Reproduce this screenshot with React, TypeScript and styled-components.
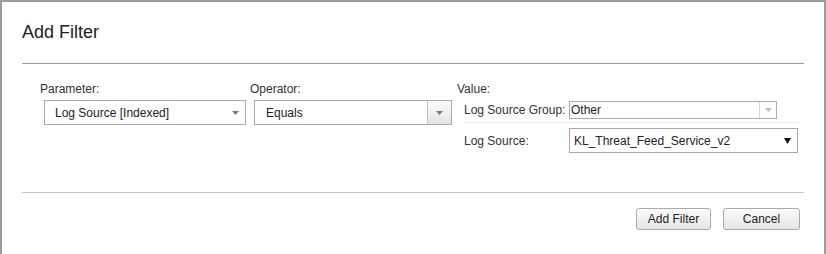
import React from 'react';
import styled, { createGlobalStyle } from 'styled-components';

const GlobalStyle = createGlobalStyle`
  html, body {
    margin: 0;
    padding: 0;
    background: #fff;
  }
  body {
    font-family: "Liberation Sans", Arial, sans-serif;
    color: #333;
  }
`;

const Dialog = styled.div`
  box-sizing: border-box;
  width: 826px;
  height: 254px;
  border: 2px solid #9c9c9c;
  border-bottom: none;
  padding: 19px 20px 0 20px;
  background: #fff;
`;

const Title = styled.h2`
  margin: 0;
  font-size: 18px;
  line-height: 22px;
  font-weight: normal;
  color: #222;
`;

const Rule = styled.div<{ $color: string; $top: number }>`
  height: 1px;
  margin-top: ${(p) => p.$top}px;
  background: ${(p) => p.$color};
`;

const Form = styled.div`
  display: flex;
  gap: 5px;
  padding: 18px 0 0 18px;
  height: 128px;
  box-sizing: border-box;
`;

const Column = styled.div<{ $width?: number }>`
  display: flex;
  flex-direction: column;
  width: ${(p) => (p.$width ? `${p.$width}px` : 'auto')};
`;

const Label = styled.div`
  font-size: 12px;
  line-height: 14px;
  color: #333;
  margin-bottom: 4px;
`;

const Select = styled.div<{ $width: number }>`
  box-sizing: border-box;
  margin-left: 4px;
  width: ${(p) => p.$width}px;
  height: 25px;
  border: 1px solid #ababab;
  background: #fff;
  display: flex;
  align-items: center;
  font-size: 12px;
  color: #222;
`;

const SelectText = styled.span<{ $pad: number }>`
  flex: 1;
  padding-left: ${(p) => p.$pad}px;
  white-space: nowrap;
`;

const ArrowZone = styled.div<{ $width: number; $shaded?: boolean }>`
  width: ${(p) => p.$width}px;
  align-self: stretch;
  display: flex;
  align-items: center;
  justify-content: center;
  border-left: ${(p) => (p.$shaded ? '1px solid #c4c4c4' : 'none')};
  background: ${(p) => (p.$shaded ? 'linear-gradient(#fbfbfb, #e4e4e4)' : 'transparent')};
`;

const ValueRows = styled.div`
  margin-left: 7px;
  width: 334px;
  display: flex;
  flex-direction: column;
`;

const ValueRow = styled.div<{ $underline?: boolean; $top?: number }>`
  display: grid;
  grid-template-columns: 105px auto;
  align-items: center;
  min-height: 20px;
  margin-top: ${(p) => p.$top || 0}px;
  padding-bottom: ${(p) => (p.$underline ? 2 : 0)}px;
  border-bottom: ${(p) => (p.$underline ? '1px solid #fbe9e9' : 'none')};
  font-size: 12px;
  color: #333;
`;

const GroupInput = styled.div`
  box-sizing: border-box;
  width: 208px;
  height: 18px;
  border: 1px solid #a8abb8;
  display: flex;
  align-items: center;
  font-size: 12px;
  color: #222;
`;

const GroupArrow = styled.div`
  width: 16px;
  align-self: stretch;
  border-left: 1px solid #d4d6de;
  display: flex;
  align-items: center;
  justify-content: center;
`;

const NativeSelect = styled.div`
  box-sizing: border-box;
  width: 229px;
  height: 25px;
  border: 1px solid #a9a9a9;
  display: flex;
  align-items: center;
  font-size: 12px;
  color: #222;
`;

const Footer = styled.div`
  display: flex;
  justify-content: flex-end;
  gap: 12px;
  padding: 15px 4px 0 0;
`;

const Button = styled.button<{ $width: number }>`
  box-sizing: border-box;
  width: ${(p) => p.$width}px;
  height: 22px;
  padding: 0;
  border: 1px solid #ababab;
  border-radius: 3px;
  background: linear-gradient(#fbfbfb, #e5e5e5);
  font-family: "Liberation Sans", Arial, sans-serif;
  font-size: 12px;
  color: #222;
`;

function Caret({ color, w = 7, h = 4 }: { color: string; w?: number; h?: number }) {
  return (
    <svg width={w} height={h} viewBox={`0 0 ${w} ${h}`}>
      <polygon points={`0,0 ${w},0 ${w / 2},${h}`} fill={color} />
    </svg>
  );
}

export default function App() {
  return (
    <>
      <GlobalStyle />
      <Dialog>
        <Title>Add Filter</Title>
        <Rule $color="#9c9c9c" $top={20} />
        <Form>
          <Column $width={205}>
            <Label>Parameter:</Label>
            <Select $width={202}>
              <SelectText $pad={10}>Log Source [Indexed]</SelectText>
              <ArrowZone $width={20}>
                <Caret color="#7a7a7a" w={7} h={4} />
              </ArrowZone>
            </Select>
          </Column>
          <Column $width={202}>
            <Label>Operator:</Label>
            <Select $width={198}>
              <SelectText $pad={11}>Equals</SelectText>
              <ArrowZone $width={23} $shaded>
                <Caret color="#7a7a7a" w={7} h={4} />
              </ArrowZone>
            </Select>
          </Column>
          <Column>
            <Label>Value:</Label>
            <ValueRows>
              <ValueRow $underline>
                <span>Log Source Group:</span>
                <GroupInput>
                  <SelectText $pad={1}>Other</SelectText>
                  <GroupArrow>
                    <Caret color="#b3bcd0" w={7} h={4} />
                  </GroupArrow>
                </GroupInput>
              </ValueRow>
              <ValueRow $top={5}>
                <span>Log Source:</span>
                <NativeSelect>
                  <SelectText $pad={4}>KL_Threat_Feed_Service_v2</SelectText>
                  <ArrowZone $width={20}>
                    <Caret color="#111" w={7} h={6} />
                  </ArrowZone>
                </NativeSelect>
              </ValueRow>
            </ValueRows>
          </Column>
        </Form>
        <Rule $color="#c8c8c8" $top={0} />
        <Footer>
          <Button $width={75}>Add Filter</Button>
          <Button $width={77}>Cancel</Button>
        </Footer>
      </Dialog>
    </>
  );
}
